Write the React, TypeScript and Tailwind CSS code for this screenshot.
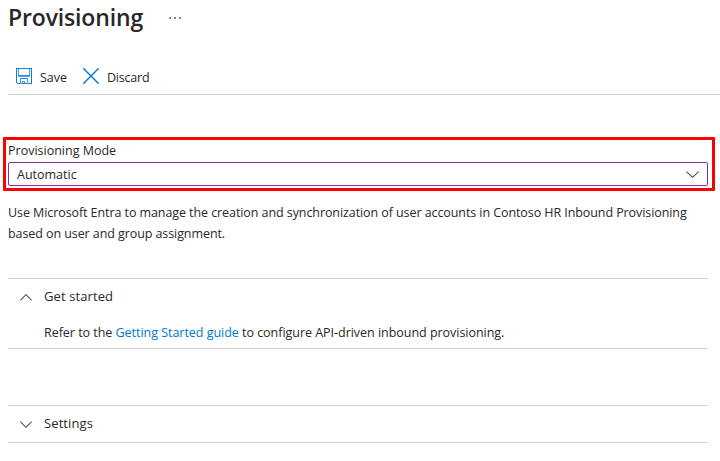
import type { ReactNode } from "react";

function SaveIcon() {
  return (
    <svg width="16" height="16" viewBox="0 0 16 16" fill="none" stroke="#0f80d8" shapeRendering="crispEdges">
      <path d="M.5 .5h15v15H1.5l-1-1z" />
      <path d="M2.5 1v7h11V1M4.5 15.5v-5h7v5" stroke="#4ba0e1" />
      <path d="M3 7.5h10M4 10.5h8" stroke="#2d8fdc" />
      <path d="M6.5 15.5v-2h2v2" stroke="#3c97df" />
    </svg>
  );
}

function DiscardIcon() {
  return (
    <svg width="16" height="16" viewBox="0 0 16 16" fill="none" stroke="#0078d4" strokeWidth="1.4">
      <path d="M.3 .3l15.4 15.4M15.7 .3L.3 15.7" />
    </svg>
  );
}

function Chevron({ up = false, size = 12 }: { up?: boolean; size?: number }) {
  return (
    <svg width={size} height="7" viewBox="0 0 12 7" preserveAspectRatio="none" fill="none" stroke="#505050" strokeWidth="1.1">
      <path d={up ? "M.3 6.4L6 .7l5.7 5.7" : "M.3 .6L6 6.3 11.7 .6"} />
    </svg>
  );
}

function SectionHeader({ title, up }: { title: string; up?: boolean }) {
  return (
    <div className="flex h-9 items-center pl-3">
      <Chevron up={up} />
      <span className="ml-3 pb-0.5 text-[13px] tracking-[0.1px]">{title}</span>
    </div>
  );
}

function Section({ children, className }: { children: ReactNode; className: string }) {
  return <section className={`mr-3 ml-2 border-y border-[#d2d2d2] ${className}`}>{children}</section>;
}

export default function App() {
  return (
    <main className="h-[461px] w-[720px] overflow-hidden bg-white font-['Open_Sans','Noto_Sans',sans-serif] text-[12.5px] leading-5 text-[#292827]">
      <header className="flex h-[62px] items-start pl-2">
        <h1 className="w-[161px] text-[23px] leading-[34px] font-semibold tracking-[-0.15px]">Provisioning</h1>
        <div className="mt-[17px] flex gap-[3px]">
          <i className="h-0.5 w-0.5 bg-[#858585]" />
          <i className="h-0.5 w-0.5 bg-[#858585]" />
          <i className="h-0.5 w-0.5 bg-[#858585]" />
        </div>
      </header>

      <div className="ml-2 flex h-[33px] border-b border-[#d2d2d2] pl-2">
        <div className="flex w-[67px] items-start pt-1.5">
          <SaveIcon />
          <span className="ml-2 leading-[19px]">Save</span>
        </div>
        <div className="flex items-start pt-1.5">
          <DiscardIcon />
          <span className="ml-2 leading-[19px] tracking-[-0.2px]">Discard</span>
        </div>
      </div>

      <div className="mt-[42px] ml-[3px] h-[54px] w-[712px] rounded-[1px] border-3 border-[#fe0000] pl-0.5">
        <div className="h-[22px] leading-[22px]">Provisioning Mode</div>
        <div className="flex h-6 w-[700px] items-center justify-between rounded-[2px] border border-[#8a2da5] pr-2 pl-2">
          <span className="pt-0.5">Automatic</span>
          <Chevron size={13} />
        </div>
      </div>

      <p className="mt-[11px] ml-2 h-[76px] leading-[21px] tracking-[-0.08px]">
        Use Microsoft Entra to manage the creation and synchronization of user accounts in Contoso HR Inbound Provisioning
        <br />
        based on user and group assignment.
      </p>

      <Section className="h-[71px]">
        <SectionHeader title="Get started" up />
        <p className="pl-9 leading-9 tracking-[-0.03px]">
          Refer to the <a className="text-[#0078d4]">Getting Started guide</a> to configure API-driven inbound provisioning.
        </p>
      </Section>
      <Section className="mt-14 h-[38px]">
        <SectionHeader title="Settings" />
      </Section>
    </main>
  );
}
